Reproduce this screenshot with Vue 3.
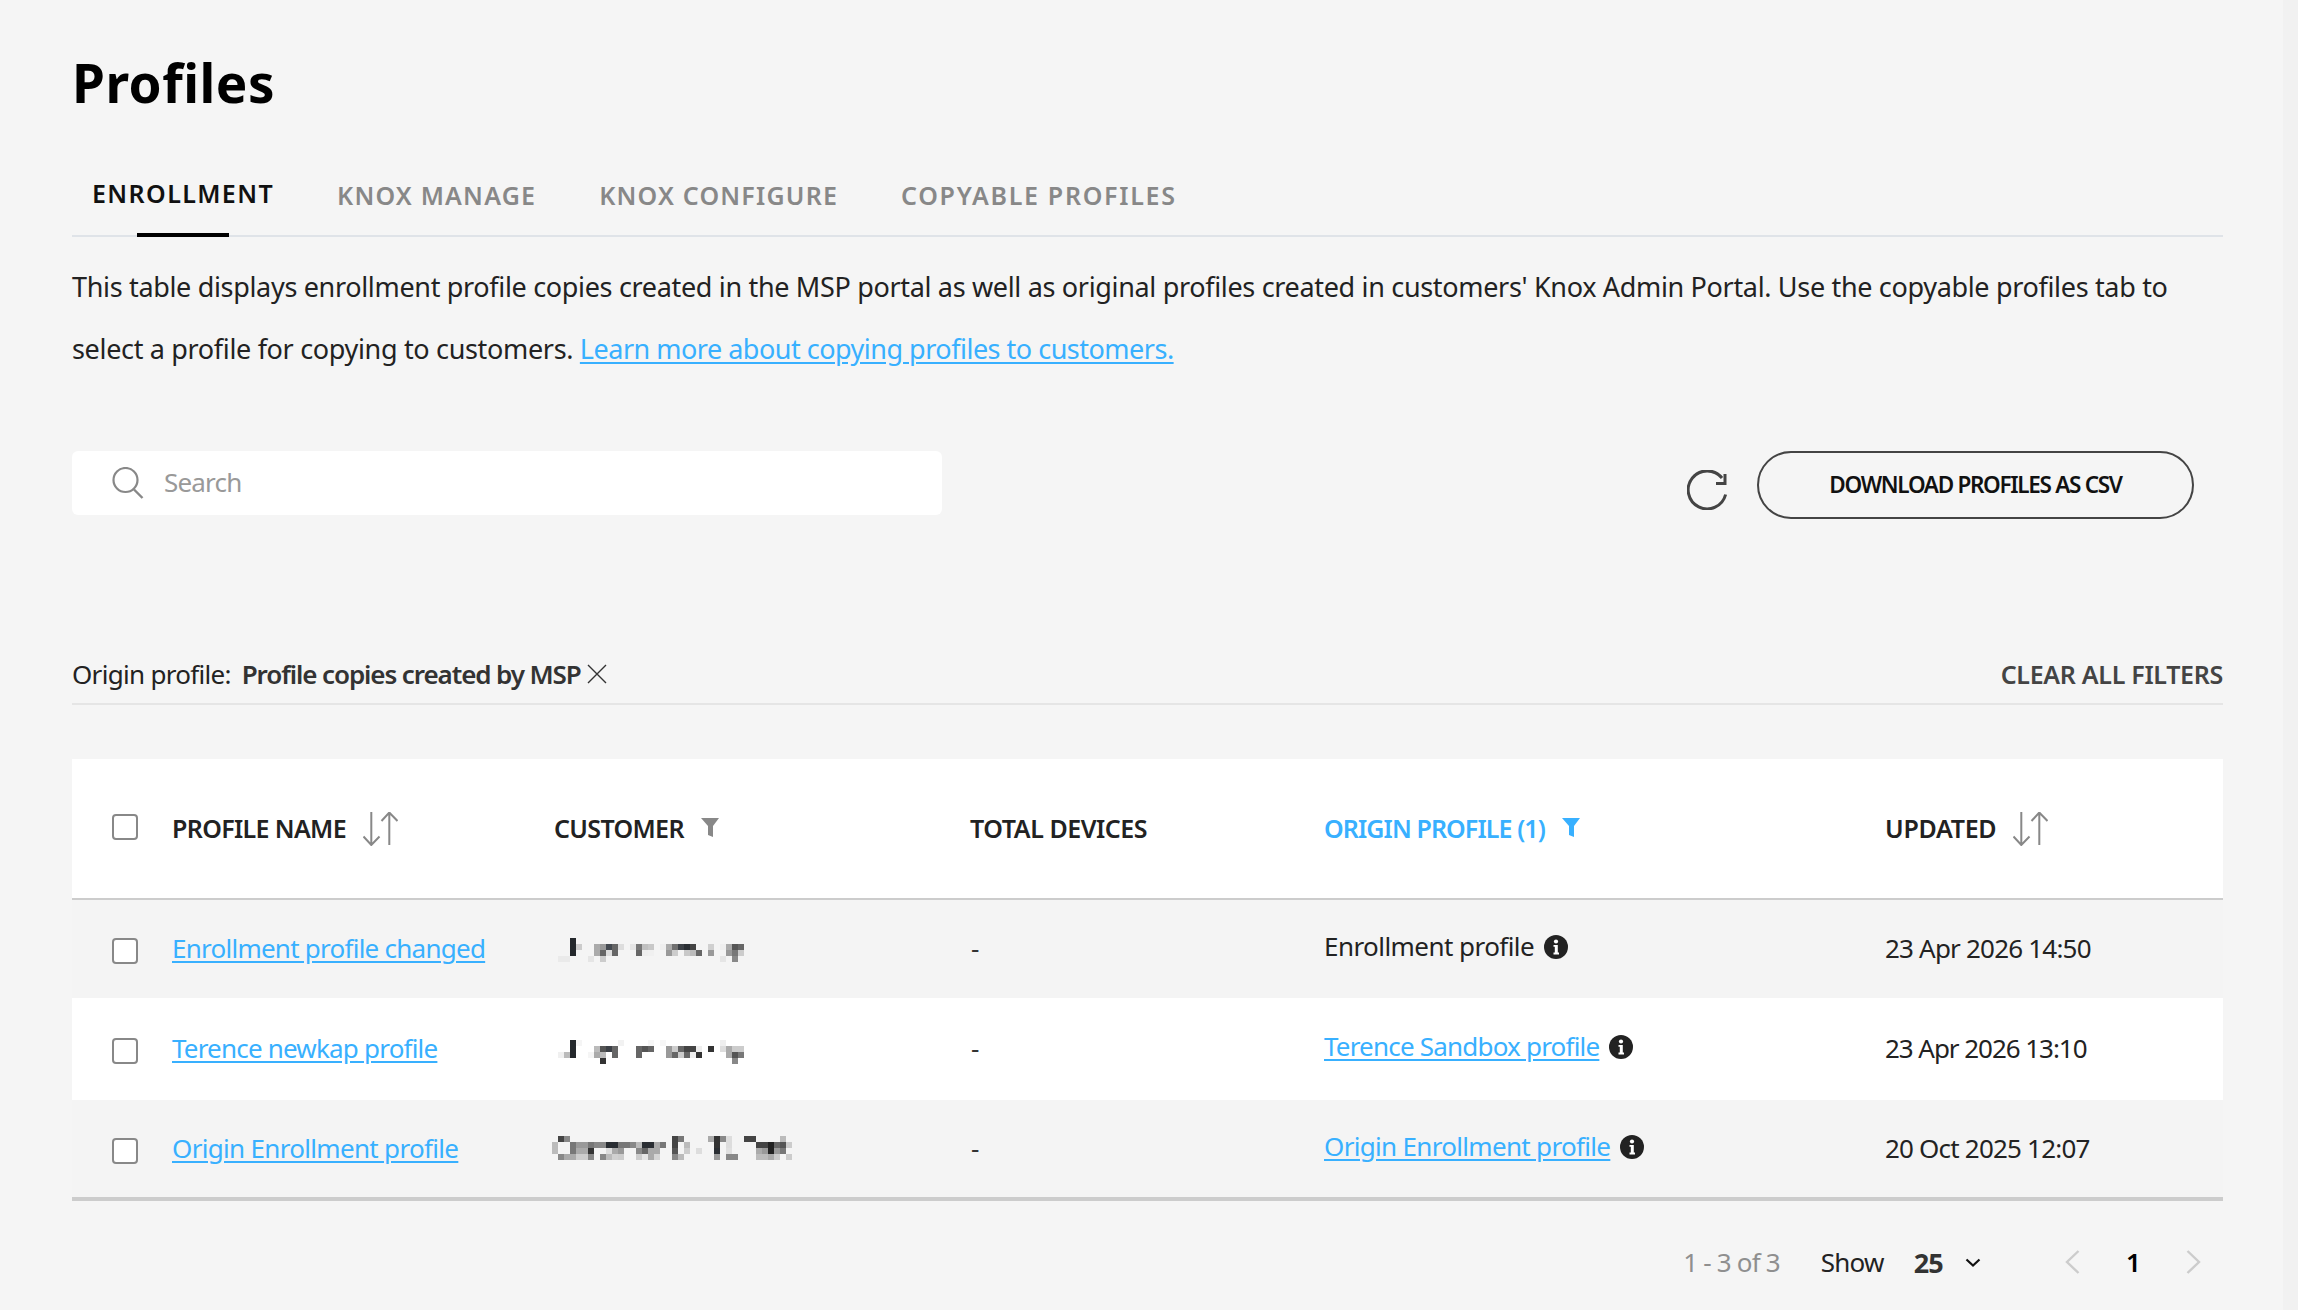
<script setup>
const mosaic = (rows) => {
  const cells = []
  rows.forEach((row, y) => {
    Object.entries(row).forEach(([x, fill]) => {
      cells.push({ x: Number(x) * 6, y: y * 6, fill })
    })
  })
  return cells
}

const blurA = mosaic([
  { 3: '#24282c' },
  { 3: '#24282c', 4: '#ccc', 7: '#aaa', 8: '#999', 9: '#444950', 10: '#666', 11: '#ddd', 13: '#e5e5e5', 14: '#777', 15: '#c0c0c0', 16: '#c8c8c8', 18: '#eee', 19: '#aaa', 20: '#707070', 21: '#3c4046', 22: '#2a2e33', 23: '#444', 26: '#d0d0d0', 28: '#eee', 29: '#aaa', 30: '#555', 31: '#666' },
  { 3: '#24282c', 7: '#aaa', 8: '#666', 9: '#ddd', 10: '#666', 14: '#666', 15: '#eee', 16: '#f0f0f0', 19: '#999', 20: '#ccc', 22: '#c8c8c8', 23: '#bbb', 24: '#666', 26: '#999', 29: '#999', 30: '#777', 31: '#ccc' },
  { 1: '#eaeaea', 2: '#eaeaea', 6: '#e5e5e5', 8: '#ccc', 28: '#e5e5e5', 30: '#888' },
])
const blurB = mosaic([
  { 3: '#24282c', 4: '#f5f5f5', 11: '#f2f2f2', 16: '#f7f7f7', 18: '#f7f7f7', 28: '#eee' },
  { 3: '#24282c', 7: '#bbb', 8: '#555', 9: '#3c4046', 10: '#666', 14: '#666', 15: '#555', 16: '#666', 19: '#999', 20: '#ccc', 21: '#666', 22: '#444', 23: '#444', 24: '#eee', 26: '#333', 28: '#ddd', 29: '#aaa', 30: '#ccc', 31: '#ccc' },
  { 1: '#f0f0f0', 2: '#bbb', 3: '#24282c', 6: '#f5f5f5', 7: '#aaa', 8: '#bbb', 10: '#666', 14: '#666', 19: '#999', 20: '#666', 21: '#ccc', 22: '#666', 23: '#eee', 24: '#333', 29: '#aaa', 30: '#555', 31: '#777' },
  { 8: '#333', 30: '#888' },
])
const blurC = mosaic([
  { 1: '#444', 2: '#888', 20: '#444', 21: '#777', 26: '#aaa', 27: '#333', 28: '#888', 29: '#ddd', 32: '#444', 33: '#444', 38: '#bbb' },
  { 0: '#bbb', 3: '#777', 4: '#999', 5: '#999', 6: '#777', 7: '#888', 8: '#888', 9: '#2a2e33', 10: '#2a2e33', 11: '#777', 12: '#777', 13: '#888', 14: '#bbb', 15: '#2a2e33', 16: '#2a2e33', 17: '#aaa', 18: '#777', 20: '#444', 22: '#bbb', 27: '#333', 29: '#ddd', 34: '#444', 35: '#444', 36: '#222', 37: '#666', 38: '#555', 39: '#ccc' },
  { 0: '#bbb', 3: '#777', 4: '#aaa', 5: '#aaa', 6: '#333', 9: '#ddd', 10: '#aaa', 11: '#999', 14: '#888', 15: '#666', 16: '#aaa', 17: '#aaa', 20: '#555', 22: '#ccc', 24: '#ddd', 27: '#2a2e33', 29: '#e0e0e0', 34: '#aaa', 35: '#999', 36: '#222', 37: '#999', 38: '#777' },
  { 1: '#888', 2: '#aaa', 3: '#aaa', 4: '#ccc', 5: '#ccc', 6: '#888', 8: '#888', 9: '#bbb', 10: '#d0d0d0', 11: '#ccc', 14: '#ccc', 15: '#e5e5e5', 16: '#aaa', 17: '#d5d5d5', 20: '#888', 21: '#bbb', 27: '#999', 29: '#888', 30: '#888', 34: '#bbb', 35: '#bbb', 36: '#aaa', 37: '#ccc', 39: '#ccc' },
])

const rows = [
  { name: 'Enrollment profile changed', blur: blurA, blurClass: 'blur-a', origin: 'Enrollment profile', originLink: false, updated: '23 Apr 2026 14:50', rowClass: 'row-a' },
  { name: 'Terence newkap profile', blur: blurB, blurClass: 'blur-b', origin: 'Terence Sandbox profile', originLink: true, updated: '23 Apr 2026 13:10', rowClass: 'row-b' },
  { name: 'Origin Enrollment profile', blur: blurC, blurClass: 'blur-c', origin: 'Origin Enrollment profile', originLink: true, updated: '20 Oct 2025 12:07', rowClass: 'row-c' },
]
</script>

<template>
  <div class="page">
    <main class="main">
      <h1 class="title">Profiles</h1>

      <nav class="tabs">
        <a class="tab tab-active">ENROLLMENT</a>
        <a class="tab">KNOX MANAGE</a>
        <a class="tab">KNOX CONFIGURE</a>
        <a class="tab tab-copy">COPYABLE PROFILES</a>
      </nav>

      <p class="intro">
        This table displays enrollment profile copies created in the MSP portal as well as original profiles created in customers' Knox Admin Portal. Use the copyable profiles tab to
        <br />
        select a profile for copying to customers. <a class="link intro-link">Learn more about copying profiles to customers.</a>
      </p>

      <div class="toolbar">
        <div class="search">
          <svg class="search-icon" width="32" height="32" viewBox="0 0 32 32">
            <circle cx="13.5" cy="13" r="12" fill="none" stroke="#888" stroke-width="2.2" />
            <path d="M22 22.5 L30.5 31" fill="none" stroke="#888" stroke-width="2.4" />
          </svg>
          <span class="search-text">Search</span>
        </div>
        <svg class="refresh" width="40" height="40" viewBox="7 10 40 40">
          <path d="M45.6 34.5 A19 19 0 1 1 42 18" fill="none" stroke="#444" stroke-width="3" />
          <path d="M46.5 14 V25 H36 V22 H43.5 V14 Z" fill="#444" />
        </svg>
        <button class="download"><span class="download-text">DOWNLOAD PROFILES AS CSV</span></button>
      </div>

      <div class="filters">
        <span class="filter-label">Origin profile:</span>
        <span class="filter-value">Profile copies created by MSP</span>
        <svg class="filter-x" width="20" height="20" viewBox="0 0 20 20">
          <path d="M1 1 L19 19 M19 1 L1 19" stroke="#333" stroke-width="1.4" fill="none" />
        </svg>
        <a class="clear">CLEAR ALL FILTERS</a>
      </div>

      <section class="table">
        <div class="grid head">
          <div class="cell-check"><span class="check check-head"></span></div>
          <div class="th">
            <span class="th-text">PROFILE NAME</span>
            <svg class="sort" width="35" height="34" viewBox="9 7 35 34">
              <path d="M17.3 7 V40 M9.5 31.5 L17.3 40 L25.5 31.5 M35.3 40 V7.5 M27.5 16 L35.3 7.5 L43.5 16" fill="none" stroke="#888" stroke-width="2" />
            </svg>
          </div>
          <div class="th">
            <span class="th-text">CUSTOMER</span>
            <svg class="funnel" width="18" height="19" viewBox="0 0 18 19">
              <path d="M0 0 H18 L12 8 V19 L7 17 V8 Z" fill="#888" />
            </svg>
          </div>
          <div class="th"><span class="th-text th-total">TOTAL DEVICES</span></div>
          <div class="th th-active">
            <span class="th-text th-origin">ORIGIN PROFILE (1)</span>
            <svg class="funnel" width="18" height="19" viewBox="0 0 18 19">
              <path d="M0 0 H18 L12 8 V19 L7 17 V8 Z" fill="#38b0ff" />
            </svg>
          </div>
          <div class="th">
            <span class="th-text th-updated">UPDATED</span>
            <svg class="sort" width="35" height="34" viewBox="9 7 35 34">
              <path d="M17.3 7 V40 M9.5 31.5 L17.3 40 L25.5 31.5 M35.3 40 V7.5 M27.5 16 L35.3 7.5 L43.5 16" fill="none" stroke="#888" stroke-width="2" />
            </svg>
          </div>
        </div>

        <div v-for="row in rows" :key="row.name" class="grid row" :class="row.rowClass">
          <div class="cell-check"><span class="check check-row"></span></div>
          <a class="link td-link td-name">{{ row.name }}</a>
          <svg class="blur" :class="row.blurClass" width="246" height="30" shape-rendering="crispEdges">
            <rect v-for="(c, i) in row.blur" :key="i" :x="c.x" :y="c.y" width="6" height="6" :fill="c.fill" />
          </svg>
          <span class="dash">-</span>
          <div class="origin">
            <a v-if="row.originLink" class="link td-link td-origin">{{ row.origin }}</a>
            <span v-else class="td-text td-origin">{{ row.origin }}</span>
            <svg class="info" width="24" height="24" viewBox="0 0 24 24">
              <circle cx="12" cy="12" r="12" fill="#222" />
              <circle cx="12" cy="6.5" r="2.1" fill="#fff" />
              <path d="M9.5 10 H13.8 V17.6 H15 V19.4 H9.5 V17.6 H10.8 V11.8 H9.5 Z" fill="#fff" />
            </svg>
          </div>
          <span class="td-text td-date">{{ row.updated }}</span>
        </div>
      </section>

      <footer class="pager">
        <span class="range">1 - 3 of 3</span>
        <span class="show">Show</span>
        <span class="size">25</span>
        <svg class="chev" width="16" height="9" viewBox="0 0 16 9">
          <path d="M1.5 1.5 L8 7.5 L14.5 1.5" fill="none" stroke="#111" stroke-width="2.2" />
        </svg>
        <svg class="prev" width="15" height="24" viewBox="0 0 15 24">
          <path d="M13.5 1 L2 12 L13.5 23" fill="none" stroke="#ccc" stroke-width="2.4" />
        </svg>
        <span class="current">1</span>
        <svg class="next" width="15" height="24" viewBox="0 0 15 24">
          <path d="M1.5 1 L13 12 L1.5 23" fill="none" stroke="#ccc" stroke-width="2.4" />
        </svg>
      </footer>
    </main>
    <aside class="rail"></aside>
  </div>
</template>

<style scoped>
.page {
  display: flex;
  height: 1310px;
  overflow: hidden;
  background: #f5f5f5;
  font-family: "Noto Sans", "Liberation Sans", sans-serif;
  font-size: 26px;
  letter-spacing: -0.8px;
  color: #222;
}
.main {
  flex: 1;
  min-width: 0;
  padding: 0 60px 0 72px;
}
.rail {
  width: 15px;
  background: #f1f1f1;
}
.title {
  margin: 50px 0 0;
  height: 66px;
  font-size: 53px;
  line-height: 66px;
  font-weight: 700;
  color: #000;
  letter-spacing: 0.5px;
}
.tabs {
  display: flex;
  align-items: flex-end;
  gap: 63px;
  height: 119px;
  padding-left: 20px;
  border-bottom: 2px solid #dfe3e8;
}
.tab {
  position: relative;
  padding-bottom: 24px;
  line-height: 32px;
  font-size: 25px;
  font-weight: 600;
  letter-spacing: 1.2px;
  color: #888;
}
.tab-copy {
  letter-spacing: 1.7px;
}
.tab-active {
  padding-bottom: 26px;
  letter-spacing: 1.4px;
  color: #111;
}
.tab-active::after {
  content: "";
  position: absolute;
  left: 45px;
  bottom: -2px;
  width: 92px;
  height: 4px;
  background: #000;
}
.intro {
  margin: 19px 0 0;
  font-size: 27px;
  line-height: 62px;
  letter-spacing: -0.33px;
}
.link {
  color: #38b0ff;
  text-decoration: underline;
  text-underline-offset: 3px;
}
.intro-link {
  letter-spacing: -0.5px;
}
.toolbar {
  display: flex;
  align-items: flex-start;
  height: 68px;
  margin-top: 71px;
  padding-right: 29px;
}
.search {
  display: flex;
  align-items: center;
  width: 870px;
  height: 64px;
  padding-left: 40px;
  box-sizing: border-box;
  background: #fff;
  border-radius: 6px;
}
.search-text {
  margin-left: 20px;
  margin-top: -2px;
  color: #999;
}
.refresh {
  margin: 19px 30px 0 auto;
}
.download {
  width: 437px;
  height: 68px;
  box-sizing: border-box;
  background: transparent;
  border: 2px solid #444;
  border-radius: 34px;
  font-family: inherit;
  font-size: 22.5px;
  font-weight: 600;
  letter-spacing: -1.3px;
  color: #111;
}
.download-text {
  position: relative;
  top: -1px;
}
.filters {
  display: flex;
  align-items: center;
  height: 58px;
  margin-top: 120px;
  padding-top: 6px;
  border-bottom: 2px solid #e5e5e5;
}
.filter-label {
  letter-spacing: -0.7px;
}
.filter-value {
  margin-left: 11px;
  font-weight: 600;
  letter-spacing: -1.1px;
  color: #333;
}
.filter-x {
  margin-left: 6px;
}
.clear {
  margin-left: auto;
  font-size: 25px;
  font-weight: 600;
  letter-spacing: -0.3px;
  color: #444;
}
.table {
  margin-top: 54px;
}
.grid {
  display: grid;
  grid-template-columns: 100px 382px 416px 354px 561px 1fr;
  align-items: center;
}
.head {
  height: 139px;
  background: #fff;
  border-bottom: 2px solid #ccc;
}
.cell-check {
  display: flex;
  padding-left: 40px;
}
.check {
  display: block;
  width: 26px;
  height: 26px;
  box-sizing: border-box;
  background: #fff;
  border: 2px solid #888;
  border-radius: 4px;
}
.check-head {
  margin-top: -3px;
}
.check-row {
  margin-top: 4px;
}
.th {
  display: flex;
  align-items: center;
  font-size: 25px;
  font-weight: 600;
  letter-spacing: -0.65px;
  color: #222;
}
.th-text {
  margin-top: -2px;
}
.th-total {
  letter-spacing: -0.45px;
}
.th-origin {
  letter-spacing: -0.9px;
}
.th-updated {
  letter-spacing: -0.3px;
}
.th-active {
  color: #38b0ff;
}
.sort {
  margin-left: 17px;
}
.funnel {
  margin-left: 17px;
  margin-top: -2px;
}
.row-a {
  height: 98px;
  background: #f4f4f4;
}
.row-b {
  height: 102px;
  background: #fff;
}
.row-c {
  height: 97px;
  background: #f4f4f4;
  border-bottom: 4px solid #ccc;
  box-sizing: content-box;
}
.td-link {
  justify-self: start;
}
.td-name,
.td-date,
.dash {
  margin-top: -2px;
}
.td-origin {
  margin-top: -2px;
}
.row-a .td-name {
  letter-spacing: -0.75px;
}
.row-a .td-origin {
  letter-spacing: -0.55px;
}
.row-b .td-date {
  letter-spacing: -1.05px;
}
.row-c .td-name,
.row-c .td-origin {
  letter-spacing: -0.68px;
}
.blur {
  margin-left: -2px;
}
.blur-a {
  margin-top: 8px;
}
.blur-b {
  margin-top: 12px;
}
.blur-c {
  margin-top: 5px;
}
.dash {
  margin-left: 1px;
  color: #333;
}
.origin {
  display: flex;
  align-items: center;
  gap: 10px;
  margin-top: -4px;
}
.pager {
  display: flex;
  align-items: center;
  justify-content: flex-end;
  height: 40px;
  margin-top: 41px;
  padding-right: 22px;
}
.range {
  color: #8f8f8f;
}
.show {
  margin-left: 41px;
}
.size {
  margin-left: 30px;
  font-size: 27px;
  font-weight: 700;
  color: #333;
}
.chev {
  margin-left: 22px;
}
.prev {
  margin-left: 84px;
}
.current {
  margin-left: 46px;
  font-weight: 600;
  color: #000;
}
.next {
  margin-left: 46px;
}
</style>

<style>
html,
body {
  margin: 0;
  background: #f5f5f5;
}
</style>
